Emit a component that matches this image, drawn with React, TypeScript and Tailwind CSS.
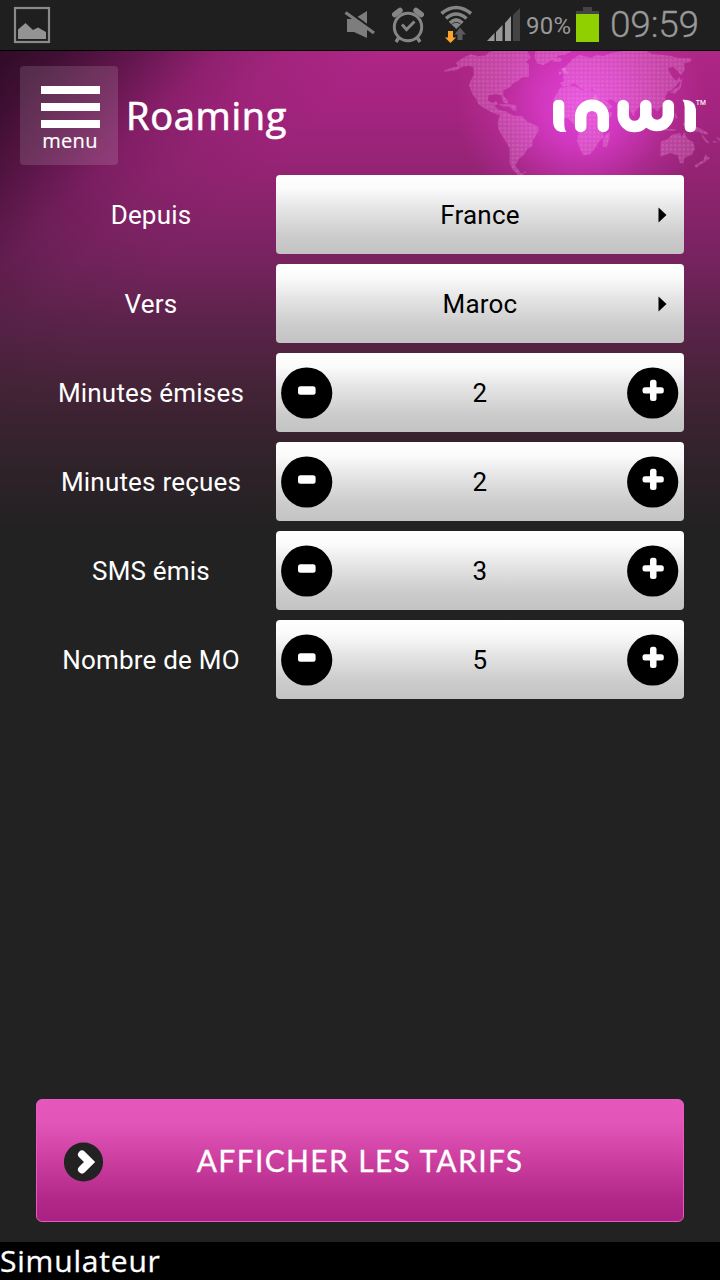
import React, { useState } from 'react';

interface StepperRow {
  id: string;
  label: string;
}

const STEPPERS: StepperRow[] = [
  { id: 'out', label: 'Minutes émises' },
  { id: 'in', label: 'Minutes reçues' },
  { id: 'sms', label: 'SMS émis' },
  { id: 'data', label: 'Nombre de MO' },
];

const StatusBar = () => (
  <div className="h-[51px] shrink-0 bg-[#1f1f1f] border-b border-black flex items-center text-[#999999] font-[Roboto,sans-serif]">
    <svg className="ml-[13px]" width="38" height="38" viewBox="0 0 38 38">
      <rect x="2" y="2" width="34" height="34" fill="none" stroke="#8a8a8a" strokeWidth="2.2" />
      <path d="M5 33V23.500L12.500 17L20 24L25 21.500L33 26V33Z" fill="#939393" />
    </svg>

    <svg className="ml-[293px] mt-px" width="32" height="32" viewBox="0 0 32 32">
      <path d="M3 9H10L23 1V28L10 22H3Z" fill="#7d7d7d" />
      <path d="M3 1L32 22" stroke="#1f1f1f" strokeWidth="3" />
      <path d="M1.500 2.500L30 23" stroke="#7d7d7d" strokeWidth="3.200" />
    </svg>

    <svg className="ml-[15px]" width="34" height="38" viewBox="0 0 34 38" fill="none" stroke="#858585">
      <circle cx="17" cy="21" r="13.700" strokeWidth="3" />
      <path d="M11 18.500L15.500 23.500L23.500 15.500" strokeWidth="3" />
      <path d="M3.800 8.500L9 4.500M30.200 8.500L25 4.500" strokeWidth="5.500" strokeLinecap="round" />
      <path d="M7.500 32L5 36M26.500 32L29 36" strokeWidth="3.500" />
    </svg>

    <svg className="ml-[14px]" width="34" height="40" viewBox="0 0 34 40" fill="none">
      <g stroke="#858585" strokeWidth="3.600">
        <path d="M2.500 8.500Q17 -3.500 32 8.500" />
        <path d="M7 13.500Q17 4.500 27.500 13.500" />
        <path d="M11 18Q17 12 23.500 18" />
      </g>
      <path d="M12.500 19.500Q17 16 22 19.500L17.300 24Z" fill="#858585" />
      <path d="M9 26H14V32.500H17L11.500 38L6 32.500H9Z" fill="#ffa32b" />
      <path d="M18.500 35V29.500H15.500L21 22.500L27 29.500H23.500V35Z" fill="#5a5a5a" />
    </svg>

    <svg className="ml-[14px]" width="33" height="34" viewBox="0 0 33 34">
      <path d="M0 33L7.500 25V33Z" fill="#999" />
      <path d="M9 33V24L15.500 17V33Z" fill="#999" />
      <path d="M18 33V15L24 8V33Z" fill="#999" />
      <path d="M26 33V7L33 0V33Z" fill="#444" />
    </svg>

    <span className="ml-[6px] w-[45px] text-[24px] tracking-[0.2px] whitespace-nowrap mt-[2px]">90%</span>

    <svg className="ml-[5px] -mt-px" width="23" height="35" viewBox="0 0 23 35">
      <path d="M7 0H16V4H23V7H0V4H7Z" fill="#444" />
      <rect y="7" width="23" height="28" fill="#90d000" />
    </svg>

    <span className="ml-[11px] text-[37px] font-light tracking-[-0.2px] mt-[-1px] [-webkit-text-stroke:0.3px_#999999]">
      09:59
    </span>
  </div>
);

const WorldMap = () => (
  <svg className="absolute right-0 top-0" width="290" height="124" viewBox="0 18 870 372">
    <defs>
      <pattern id="dots" width="12.800" height="12.800" patternUnits="userSpaceOnUse">
        <rect width="12.800" height="12.800" fill="#ffb0ee" fillOpacity="0.200" />
        <circle cx="6.400" cy="6.400" r="4.500" fill="#ffc4f2" fillOpacity="0.140" />
      </pattern>
    </defs>
    <g fill="url(#dots)">
      {/* North and Central America */}
      <path d="M42 76L84 63L78 53L99 38L123 28L145 34L168 31L176 22L190 18H292L302 38L287 52L297 57V96L276 97L264 107L248 116L240 127L220 136V153L235 168L232 178L219 170L214 150L197 148L176 151L174 166L187 174L199 169L203 178L194 184L207 195L234 201L229 208L202 209L183 201L166 191L145 178L138 161L128 150L117 121L122 108L132 88L130 67L116 62L98 65L78 76L45 80Z" />
      <path d="M205 177H235L259 181V198L248 196L240 185L216 184Z" />
      {/* South America */}
      <path d="M210 210L236 204L251 212L276 213L293 231L324 244L326 257L308 287L307 303L291 313L283 329L266 342L256 363L275 386L288 378V382L276 390H264L247 373L239 353V310L220 278L205 253L203 232Z" />
      {/* Greenland, Iceland */}
      <path d="M316 18H426L404 30L388 31L358 50L340 61L321 55L314 38Z" />
      <path d="M367 41L386 37L396 43L390 51L370 50Z" />
      {/* Europe and Asia */}
      <path d="M392 71L407 65L417 54L428 42L449 29L463 34L483 38L500 30L520 33L545 23L580 18H650L667 27L719 32L747 39L784 40L783 50L762 55L764 75L753 91L741 77L730 65L713 70L725 93L738 108L748 96L752 106L738 123L726 134L713 141L705 157L712 174L694 186L682 199L667 187L664 211L678 233L672 240L649 205L628 185L615 200L611 214L599 194L583 176L557 172L544 163L529 168L547 184L534 197L518 207L499 171L489 158L498 145L486 133L466 136L449 129L435 114L417 122L397 125L390 113L403 107L397 96L411 88Z" />
      <path d="M394 72L405 68L414 86L401 92ZM388 79L396 82L391 90L385 87Z" />
      <path d="M720 142L733 133L748 124L752 105L758 99L752 128L735 146Z" />
      {/* Africa */}
      <path d="M391 128L420 123L438 125L456 136L481 134L496 143L504 164L516 190L527 201L547 202L542 216L523 233L518 256L521 278L508 288L496 309L480 328L460 331L449 310L441 287L446 264L433 239L413 219L391 220L373 205L370 163Z" />
      <path d="M527 267L540 262L537 285L530 306H520L519 285Z" />
      {/* Indonesia, Australia, New Zealand */}
      <path d="M655 217L680 235L690 248L677 246ZM684 234L702 219L713 230L706 246L689 247ZM734 200L743 218L737 222ZM756 235L786 239L812 251L835 264L831 270L805 260L779 258ZM684 250L738 253L734 258L690 256Z" />
      <path d="M692 290L712 283L727 268L751 265L755 277L762 261L773 282L790 292L795 311L785 329L763 339L760 355H750L743 331L721 324L691 335Z" />
      <path d="M793 361L820 346L826 328L840 340L823 352L798 368ZM815 264L829 284L838 292L833 296L817 278ZM847 287L865 291L853 293ZM857 277L870 280V289Z" />
    </g>
  </svg>
);

const Logo = () => (
  <div className="flex items-start text-white">
    <svg width="143" height="34" viewBox="0 0 143 34" fill="none">
      <path d="M0 6.500Q0 0.800 5.700 0.800Q11.300 0.800 11.300 6.500V24Q11.300 31 13.500 32.800Q0 35 0 21Z" fill="#fff" />
      <path d="M27.700 27.500V17.500A11.300 11.300 0 0 1 50.300 17.500V27.500" stroke="#fff" strokeWidth="11.500" strokeLinecap="round" />
      <path
        d="M70.200 6.500V16.500A11.300 11 0 0 0 92.800 16.500V6.500M92.800 16.500A11.300 11 0 0 0 115.300 16.500V6.500"
        stroke="#fff"
        strokeWidth="11.500"
        strokeLinecap="round"
      />
      <path d="M129.500 0.800Q143 0 143 12.500V27.500Q143 33.200 137.300 33.200Q131.600 33.200 131.600 27.500V8Q131.600 3.500 129.500 0.800Z" fill="#fff" />
    </svg>
    <span className="text-[6.500px] leading-[8px] font-medium font-[Inter,sans-serif]">TM</span>
  </div>
);

const RoundButton = ({ kind, onClick }: { kind: 'minus' | 'plus'; onClick: () => void }) => (
  <button onClick={onClick} aria-label={kind} className="w-[52px] h-[52px]">
    <svg width="52" height="52" viewBox="0 0 52 52">
      <circle cx="25.700" cy="26" r="25.600" fill="#000" />
      {kind === 'minus' ? (
        <rect x="17" y="19.200" width="17.600" height="8.600" rx="2.500" fill="#fff" />
      ) : (
        <g fill="#fff">
          <rect x="15.500" y="20.200" width="21.300" height="6.300" rx="2.500" />
          <rect x="23" y="12.800" width="6.500" height="21.300" rx="2.500" />
        </g>
      )}
    </svg>
  </button>
);

const FIELD =
  'h-[79px] rounded-[4px] bg-[linear-gradient(#ffffff_0%,#fafafa_18%,#e5e5e5_43%,#cccccc_77%,#c3c3c3_100%)] text-black';

const RowLabel = ({ children }: { children: React.ReactNode }) => (
  <div className="flex items-center justify-center pt-[2px] text-white">{children}</div>
);

const SelectRow = ({ label, value }: { label: string; value: string }) => (
  <>
    <RowLabel>{label}</RowLabel>
    <button className={`${FIELD} grid grid-cols-[52px_1fr_52px] items-center px-[5px]`}>
      <span />
      <span className="pt-px">{value}</span>
      <svg className="ml-[31px]" width="9" height="16" viewBox="0 0 9 16">
        <path d="M0.500 0.500L8.500 8L0.500 15.500Z" fill="#000" />
      </svg>
    </button>
  </>
);

export default function App() {
  const [values, setValues] = useState<Record<string, number>>({ out: 2, in: 2, sms: 3, data: 5 });

  const step = (id: string, delta: number) =>
    setValues(prev => ({ ...prev, [id]: Math.max(0, prev[id] + delta) }));

  return (
    <div className="w-[720px] h-[1280px] overflow-hidden flex flex-col bg-[#222222]">
      <StatusBar />

      <div className="relative isolate flex-1 flex flex-col">
        {/* Backdrop: vertical fade, dark corner on the left, glow behind the map */}
        <div className="absolute inset-x-0 top-0 h-[480px] -z-10 bg-[linear-gradient(#ae2686_0px,#a62480_50px,#932373_124px,#782360_205px,#5c234b_270px,#432336_340px,#2f2229_415px,#222222_480px)]">
          <div className="absolute inset-0 bg-[linear-gradient(135deg,rgba(20,6,18,0.82)_0px,rgba(20,6,18,0.7)_45px,rgba(22,6,20,0.5)_95px,rgba(26,10,24,0.2)_155px,rgba(30,20,28,0.07)_205px,rgba(34,25,32,0)_270px)]" />
          <div className="absolute inset-0 bg-[radial-gradient(circle_125px_at_582px_55px,rgba(236,70,232,0.88)_0%,rgba(226,62,214,0.7)_35%,rgba(216,56,194,0.28)_70%,rgba(200,45,170,0)_100%)]" />
          <WorldMap />
        </div>

        <header className="h-[124px] shrink-0 flex pl-5 pr-[14px] pt-[15px]">
          <button className="w-[98px] h-[99px] rounded-[4px] bg-white/13 flex flex-col items-center pt-5 text-white">
            <span className="flex flex-col gap-[9px] w-[59px] ml-[2px]">
              <span className="h-2 bg-white" />
              <span className="h-2 bg-white" />
              <span className="h-2 bg-white" />
            </span>
            <span className="mt-px ml-[2px] text-[20px] leading-[24px] tracking-[0.3px] font-['Open_Sans',sans-serif] [-webkit-text-stroke:0.2px_white]">
              menu
            </span>
          </button>
          <h1 className="ml-[8px] mt-[23px] text-[38px] leading-[52px] tracking-[0.7px] text-white font-['Open_Sans',sans-serif] [-webkit-text-stroke:0.7px_white]">
            Roaming
          </h1>
          <div className="ml-auto mt-[33px]">
            <Logo />
          </div>
        </header>

        <section className="px-9 grid grid-cols-[230px_408px] gap-[10px] text-[26px] tracking-[0.2px] font-[Roboto,sans-serif]">
          <SelectRow label="Depuis" value="France" />
          <SelectRow label="Vers" value="Maroc" />
          {STEPPERS.map(({ id, label }) => (
            <React.Fragment key={id}>
              <RowLabel>{label}</RowLabel>
              <div className={`${FIELD} flex items-center justify-between px-[5px]`}>
                <RoundButton kind="minus" onClick={() => step(id, -1)} />
                <span className="pt-[2px]">{values[id]}</span>
                <RoundButton kind="plus" onClick={() => step(id, 1)} />
              </div>
            </React.Fragment>
          ))}
        </section>

        <button className="mt-auto mb-5 mx-9 h-[123px] rounded-[6px] border border-[#e85abf] bg-[linear-gradient(#e657bd_0%,#e255b8_20%,#ca3d9f_52%,#b32989_80%,#a92182_100%)] grid grid-cols-[67px_1fr_67px] items-center text-white">
          <svg className="ml-[27px] mt-[3px]" width="40" height="40" viewBox="0 0 40 40">
            <circle cx="19.500" cy="20" r="19.600" fill="#222" />
            <path d="M18 12.500L25.500 20L18 27.500" fill="none" stroke="#fff" strokeWidth="8" strokeLinecap="round" />
          </svg>
          <span className="text-[30px] tracking-[1.350px] font-[Lato,sans-serif] [-webkit-text-stroke:0.3px_white]">
            AFFICHER LES TARIFS
          </span>
        </button>
      </div>

      <footer className="h-[38px] shrink-0 bg-black text-white text-[30px] leading-[37px] tracking-[0.8px] font-['Open_Sans',sans-serif] [-webkit-text-stroke:0.3px_white]">
        Simulateur
      </footer>
    </div>
  );
}
